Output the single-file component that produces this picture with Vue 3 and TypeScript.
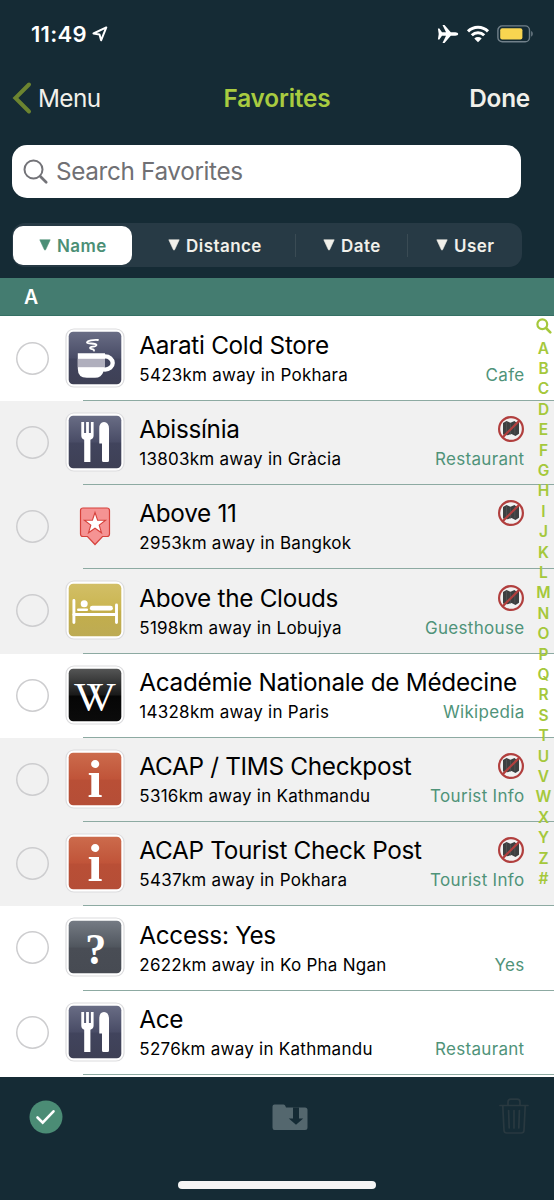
<script setup lang="ts">
type IconKind = 'cafe' | 'food' | 'pin' | 'bed' | 'wiki' | 'info' | 'unknown'

interface Favorite {
  name: string
  place: string
  kind: IconKind
  category?: string
  offMap?: boolean
  shaded?: boolean
}

const sorts: string[] = ['Name', 'Distance', 'Date', 'User']

const favorites: Favorite[] = [
  { name: 'Aarati Cold Store', place: '5423km away in Pokhara', kind: 'cafe', category: 'Cafe' },
  { name: 'Abissínia', place: '13803km away in Gràcia', kind: 'food', category: 'Restaurant', offMap: true, shaded: true },
  { name: 'Above 11', place: '2953km away in Bangkok', kind: 'pin', offMap: true, shaded: true },
  { name: 'Above the Clouds', place: '5198km away in Lobujya', kind: 'bed', category: 'Guesthouse', offMap: true, shaded: true },
  { name: 'Académie Nationale de Médecine', place: '14328km away in Paris', kind: 'wiki', category: 'Wikipedia' },
  { name: 'ACAP / TIMS Checkpost', place: '5316km away in Kathmandu', kind: 'info', category: 'Tourist Info', offMap: true, shaded: true },
  { name: 'ACAP Tourist Check Post', place: '5437km away in Pokhara', kind: 'info', category: 'Tourist Info', offMap: true, shaded: true },
  { name: 'Access: Yes', place: '2622km away in Ko Pha Ngan', kind: 'unknown', category: 'Yes' },
  { name: 'Ace', place: '5276km away in Kathmandu', kind: 'food', category: 'Restaurant' },
]

const letters: string[] = [...'ABCDEFGHIJKLMNOPQRSTUVWXYZ#']
</script>

<template>
  <div class="screen">
    <div class="status">
      <span class="clock">11:49</span>
      <svg class="locate" width="16" height="16" viewBox="0 0 16 16">
        <path d="M14.300 1.400 1.500 7.500l6 1 1.600 5.800z" fill="none" stroke="#fff" stroke-width="2" stroke-linejoin="round" />
      </svg>
      <div class="signals">
        <svg width="22" height="20" viewBox="0 0 22 20">
          <path d="M.9 4.600h1.500L5 8.200l4 .1L5.500.9h2l6.300 7.400h4.400c1.700 0 3 .8 3 1.700s-1.300 1.700-3 1.700h-4.400L7.500 19.100h-2L9 11.700l-4 .1-2.600 3.600H.9L1.700 10z" fill="#fff" />
        </svg>
        <svg width="24" height="18" viewBox="0 0 24 18">
          <g fill="none" stroke="#fff" stroke-width="3">
            <path d="M2 6.400a14.200 14.200 0 0 1 20 0" />
            <path d="M5.800 10.300a8.800 8.800 0 0 1 12.400 0" />
          </g>
          <path d="M12 17.200 8.300 13.500a5.400 5.400 0 0 1 7.400 0z" fill="#fff" />
        </svg>
        <svg width="37" height="18" viewBox="0 0 37 18">
          <rect x=".9" y=".9" width="31.600" height="15.800" rx="4.300" fill="none" stroke="#71808a" stroke-width="1.400" />
          <rect x="3.200" y="3.200" width="22.200" height="11.200" rx="2" fill="#f8d550" />
          <path d="M34.200 6v5.600c2-.8 2-4.800 0-5.600z" fill="#71808a" />
        </svg>
      </div>
    </div>

    <nav class="nav">
      <a class="back">
        <svg width="20" height="34" viewBox="0 0 20 34">
          <path d="M17 3.500 3.400 17 17 30.500" fill="none" stroke="#6c8430" stroke-width="4" stroke-linecap="round" stroke-linejoin="miter" />
        </svg>
        <span>Menu</span>
      </a>
      <h1>Favorites</h1>
      <a class="done">Done</a>
    </nav>

    <div class="search">
      <svg width="26" height="26" viewBox="0 0 26 26">
        <circle cx="10.500" cy="10.500" r="9" fill="none" stroke="#737378" stroke-width="2" />
        <path d="m17.200 17.200 6 6" stroke="#737378" stroke-width="2.700" stroke-linecap="round" />
      </svg>
      <span>Search Favorites</span>
    </div>

    <div class="sorts">
      <div v-for="(label, i) in sorts" :key="label" :class="['sort', `by-${label.toLowerCase()}`, { active: i === 0 }]">
        <svg width="12" height="12" viewBox="0 0 12 12">
          <path d="M.8.800h10.400L6.700 10.600q-.7 1.200-1.400 0z" fill="currentColor" stroke="currentColor" stroke-width=".6" stroke-linejoin="round" />
        </svg>
        <span>{{ label }}</span>
      </div>
    </div>

    <div class="section">A</div>

    <div class="table">
      <div v-for="f in favorites" :key="f.name" :class="['row', { shaded: f.shaded }]">
        <span class="check"></span>
        <svg v-if="f.kind === 'pin'" class="icon" width="60" height="60" viewBox="0 0 60 60">
          <path d="M18 12h24q2.500 0 2.500 2.500V38q0 2.500-2.500 2.500h-4.500L30 48.500l-7.500-8H18q-2.500 0-2.500-2.500V14.500Q15.500 12 18 12z" fill="#f59393" stroke="#d6413b" stroke-width="1.200" />
          <path d="m30 16.500 2.600 7.600 8 .1-6.400 4.900 2.300 7.700-6.500-4.600-6.500 4.600 2.300-7.700-6.400-4.900 8-.1z" fill="#fff" stroke="#d6413b" stroke-width="1.100" />
        </svg>
        <svg v-else class="icon" width="60" height="60" viewBox="0 0 60 60">
          <defs>
            <linearGradient id="navy" x1="0" y1="0" x2="0" y2="1">
              <stop offset="0" stop-color="#696d85" /><stop offset=".5" stop-color="#494c66" /><stop offset=".52" stop-color="#41445d" /><stop offset="1" stop-color="#3e4055" />
            </linearGradient>
            <linearGradient id="gold" x1="0" y1="0" x2="0" y2="1">
              <stop offset="0" stop-color="#d2bf67" /><stop offset=".5" stop-color="#cab550" /><stop offset=".52" stop-color="#c3ae4b" /><stop offset="1" stop-color="#bdab54" />
            </linearGradient>
            <linearGradient id="ink" x1="0" y1="0" x2="0" y2="1">
              <stop offset="0" stop-color="#555656" /><stop offset=".5" stop-color="#191919" /><stop offset=".52" stop-color="#060606" /><stop offset="1" stop-color="#0b0b0b" />
            </linearGradient>
            <linearGradient id="rust" x1="0" y1="0" x2="0" y2="1">
              <stop offset="0" stop-color="#cc6b4c" /><stop offset=".5" stop-color="#c05439" /><stop offset=".52" stop-color="#b94f36" /><stop offset="1" stop-color="#b54e37" />
            </linearGradient>
            <linearGradient id="slate" x1="0" y1="0" x2="0" y2="1">
              <stop offset="0" stop-color="#757b84" /><stop offset=".5" stop-color="#50565e" /><stop offset=".52" stop-color="#494d55" /><stop offset="1" stop-color="#474b53" />
            </linearGradient>
          </defs>
          <rect x="1" y="1" width="58" height="58" rx="8" fill="#fff" stroke="#dcdcde" stroke-width="1.200" />
          <rect :class="['tile', f.kind]" x="3.700" y="3.700" width="52.600" height="52.600" rx="4.500" />
          <template v-if="f.kind === 'cafe'">
            <ellipse cx="40" cy="35" rx="7.700" ry="6.700" fill="#42455e" stroke="#fff" stroke-width="4.300" />
            <path d="M12.800 25.200H40V36q0 4-1.500 7.500-2 6.300-8.500 6.300h-8.200q-9 0-9-9z" fill="#fff" />
            <path d="M12.800 30.800H40v8.400H12.800z" fill="#b0afbd" />
            <path d="M33 12c-5-.4-10.500.8-11 2.400s9.500.5 9.500 2.600-6.500 1.300-6.500 2.900 4.500.8 4 2.800" fill="none" stroke="#fff" stroke-width="1.800" stroke-linecap="round" />
          </template>
          <g v-else-if="f.kind === 'food'" fill="#fff">
            <path d="M16.300 10h2.800v11h2V10h2.800v11h2V10h2.700v13.500q0 3.200-3.200 4.300V50h-6.200V27.800q-2.900-1.100-2.900-4.300z" />
            <path d="M34.300 31.500v-15q0-6.500 4.700-6.500t5 6.500V48.500q0 1.500-1.500 1.500h-4q-1.500 0-1.500-1.500v-17z" />
          </g>
          <g v-else-if="f.kind === 'bed'" fill="none" stroke="#fff" stroke-linecap="round">
            <path d="M8.900 20.500v22M51.500 25v17.500" stroke-width="2.900" />
            <path d="M9 34.500h42" stroke-width="3" />
            <path d="M13.300 29.700h8.500" stroke-width="2.600" />
            <path d="M27.300 28.200h18.200" stroke-width="4.800" />
            <circle cx="19.200" cy="23.700" r="3.500" fill="#fff" stroke="none" />
          </g>
          <text v-else-if="f.kind === 'wiki'" class="glyph roman" x="30" y="44.800">VV</text>
          <text v-else-if="f.kind === 'info'" class="glyph info-mark" x="30" y="47.500" textLength="15" lengthAdjust="spacingAndGlyphs">i</text>
          <text v-else class="glyph question" x="30.800" y="46.800" textLength="21" lengthAdjust="spacingAndGlyphs">?</text>
        </svg>
        <div class="text">
          <div class="line">
            <span class="name">{{ f.name }}</span>
            <svg v-if="f.offMap" class="offmap" width="28" height="28" viewBox="0 0 28 28">
              <path d="M6 8 9.500 6l4 1.800L17.500 6l2 1.800 2.500-1v12l-3.500 2.200-4-2-4 1.200L6 19.500z" fill="#3d3f40" />
              <path d="M9.500 7v11M13.500 8.500v11M17.800 8v11" stroke="#5a5c5d" stroke-width=".6" />
              <circle cx="14" cy="14" r="11.900" fill="none" stroke="#b13f3e" stroke-width="2.200" />
              <path d="M5.600 22.400 22.400 5.600" stroke="#b13f3e" stroke-width="2.200" />
            </svg>
          </div>
          <div class="line sub">
            <span class="place">{{ f.place }}</span>
            <span class="category">{{ f.category }}</span>
          </div>
        </div>
      </div>

      <div class="index">
        <svg width="16" height="16" viewBox="0 0 16 16">
          <circle cx="6.300" cy="6.300" r="4.900" fill="none" stroke="#a5c83b" stroke-width="2.200" />
          <path d="m10 10 4.300 4.300" stroke="#a5c83b" stroke-width="2.600" stroke-linecap="round" />
        </svg>
        <span v-for="l in letters" :key="l">{{ l }}</span>
      </div>
    </div>

    <footer class="toolbar">
      <div class="tools">
        <svg width="34" height="34" viewBox="0 0 34 34">
          <circle cx="17" cy="17" r="16.500" fill="#4b8c75" />
          <path d="m8.500 17.500 5.200 5.200L24.500 11.300" fill="none" stroke="#fff" stroke-width="2.600" stroke-linecap="round" />
        </svg>
        <svg width="36" height="27" viewBox="0 0 36 27">
          <path d="M2.500.500h9q1.500 0 2 1.700l.5 1.300h19q2.500 0 2.500 2.500v17.500q0 2.500-2.500 2.500h-30.500Q.500 26 .500 23.500v-21q0-2 2-2z" fill="#54676e" />
          <path d="M21 3.500h6v11h4.200L24 20.800l-7.200-6.300H21z" fill="#152b35" />
        </svg>
        <svg class="trash" width="30" height="37" viewBox="0 0 30 37">
          <g fill="none" stroke="#293940" stroke-width="1.700" stroke-linecap="round" stroke-linejoin="round">
            <path d="M1 7.500h28M9 7V4q0-2.800 2.800-2.800h6.400Q21 1.200 21 4v3M3.800 8l1.200 24.500q.2 2.500 2.700 2.500h14.600q2.500 0 2.700-2.500L26.200 8" />
            <path d="m9.600 12.500.6 17.500M15 12.500V30M20.400 12.500 19.800 30" />
          </g>
        </svg>
      </div>
      <div class="home"></div>
    </footer>
  </div>
</template>

<style>
html,
body {
  margin: 0;
  background: #152b35;
}
</style>

<style scoped>
.screen {
  width: 554px;
  height: 1200px;
  overflow: hidden;
  display: flex;
  flex-direction: column;
  background: #152b35;
  color: #f1f0ea;
  font-family: Inter, 'Liberation Sans', sans-serif;
}
.status {
  height: 68px;
  display: flex;
  align-items: center;
  padding: 0 20px 0 31px;
  color: #fff;
}
.clock {
  font-size: 22px;
  font-weight: 600;
  letter-spacing: 0.300px;
  line-height: 30px;
}
.locate { margin-left: 5px; }
.signals {
  margin-left: auto;
  display: flex;
  align-items: center;
  gap: 7px;
}
.nav {
  height: 60px;
  display: grid;
  grid-template-columns: 1fr auto 1fr;
  align-items: center;
  padding: 0 24px;
  font-size: 24.300px;
  line-height: 30px;
}
.nav h1 {
  margin: 0;
  font-size: inherit;
  font-weight: 600;
  letter-spacing: -0.150px;
  color: #a9cb40;
}
.back {
  margin-left: -12px;
  display: flex;
  align-items: center;
  gap: 6px;
  letter-spacing: -0.600px;
}
.done {
  text-align: right;
  font-weight: 600;
  letter-spacing: -0.200px;
}
.search {
  margin: 17px 0 0 12px;
  width: 508.500px;
  height: 53px;
  box-sizing: border-box;
  padding: 0 11px;
  border-radius: 15px;
  background: #fff;
  color: #707074;
  display: flex;
  align-items: center;
  gap: 7px;
  font-size: 24.300px;
  letter-spacing: -0.350px;
}
.search span { padding-bottom: 2px; }
.sorts {
  margin: 25px 0 11px 12px;
  width: 510px;
  height: 44px;
  box-sizing: border-box;
  padding: 3px 1px;
  border-radius: 13px;
  background: #273a45;
  display: flex;
  align-items: center;
  font-size: 17px;
  font-weight: 600;
  letter-spacing: 0.450px;
}
.sort {
  height: 23px;
  box-sizing: border-box;
  display: flex;
  align-items: center;
  gap: 6px;
}
.sort span { padding-top: 1px; }
.sort.by-name {
  width: 119px;
  height: 39px;
  padding-left: 26px;
  border-radius: 10px;
}
.sort.active {
  background: #fff;
  color: #4b8f76;
}
.sort.by-distance { width: 164px; padding-left: 36px; border-right: 1.500px solid #3a4b54; }
.sort.by-date { width: 112px; padding-left: 27px; border-right: 1.500px solid #3a4b54; }
.sort.by-user { padding-left: 28px; }
.section {
  height: 38px;
  box-sizing: border-box;
  padding-left: 24px;
  border-bottom: 1px solid #357064;
  background: #447c70;
  color: #fff;
  font-size: 19.500px;
  font-weight: 600;
  line-height: 38px;
}
.table {
  position: relative;
  height: 761px;
  box-sizing: border-box;
  padding-top: 0.500px;
  background: #fff;
  color: #000;
}
.row {
  height: 84.250px;
  display: flex;
  align-items: center;
}
.row.shaded { background: #f1f1f1; }
.check {
  width: 33px;
  height: 33px;
  margin: 0 16.500px 1px 16px;
  flex: none;
  box-shadow: inset 0 0 0 1.500px #cdcdcf;
  border-radius: 50%;
}
.icon { flex: none; margin: 0 0 2px -1px; }
.tile.cafe,
.tile.food { fill: url(#navy); }
.tile.bed { fill: url(#gold); }
.tile.wiki { fill: url(#ink); }
.tile.info { fill: url(#rust); }
.tile.unknown { fill: url(#slate); }
.glyph {
  fill: #fff;
  text-anchor: middle;
  font-family: 'Liberation Serif', serif;
}
.roman {
  font-size: 41px;
  letter-spacing: -16.800px;
  text-anchor: start;
  transform: translateX(-21.200px);
}
.info-mark { font-size: 52px; font-weight: 700; }
.question { font-size: 45px; font-weight: 700; }
.text {
  flex: 1;
  height: 100%;
  box-sizing: border-box;
  margin-left: -41.500px;
  padding: 13.400px 29.500px 0 56.300px;
  border-bottom: 1px solid #8daaa2;
}
.line {
  height: 30px;
  display: flex;
  align-items: center;
  justify-content: space-between;
  white-space: nowrap;
}
.name {
  font-size: 24.300px;
  letter-spacing: -0.290px;
}
.offmap { margin-right: -0.500px; flex: none; }
.sub { font-size: 17px; letter-spacing: 0.260px; }
.category { color: #4f9379; letter-spacing: 0.320px; }
.index {
  position: absolute;
  top: 1px;
  right: 0;
  width: 21px;
  display: flex;
  flex-direction: column;
  align-items: center;
  color: #a5c83b;
  font-size: 15.500px;
  font-weight: 600;
  line-height: 20.400px;
}
.index svg { margin: 1px 0 4.500px; }
.toolbar {
  flex: 1;
  display: flex;
  flex-direction: column;
  justify-content: space-between;
  padding-bottom: 11.500px;
}
.tools {
  height: 80px;
  padding: 0 25.500px 0 29px;
  display: grid;
  grid-template-columns: 242.500px 1fr auto;
  align-items: center;
}
.trash { margin-bottom: 2px; }
.home {
  align-self: center;
  width: 198px;
  height: 8px;
  border-radius: 4px;
  background: #f5f5f5;
}
</style>
